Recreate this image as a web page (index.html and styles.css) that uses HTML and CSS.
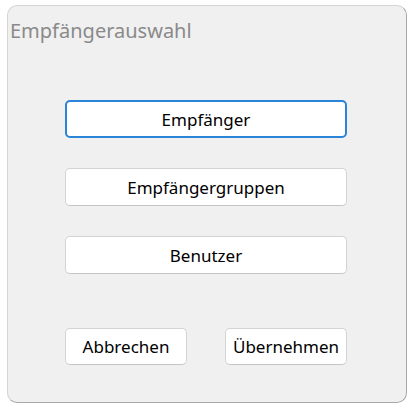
FILE: index.html
```html
<!DOCTYPE html>
<html lang="de">
<head>
<meta charset="utf-8">
<title>Empfängerauswahl</title>
<link rel="stylesheet" href="styles.css">
</head>
<body>
<div class="dialog">
  <div class="title">Empfängerauswahl</div>
  <div class="choices">
    <button class="btn btn-big btn-primary">Empfänger</button>
    <button class="btn btn-big">Empfängergruppen</button>
    <button class="btn btn-big">Benutzer</button>
  </div>
  <div class="footer">
    <button class="btn btn-small">Abbrechen</button>
    <button class="btn btn-small">Übernehmen</button>
  </div>
</div>
</body>
</html>
```
FILE: styles.css
```css
html, body {
  margin: 0;
  padding: 0;
  background: #ffffff;
}
body {
  font-family: "Noto Sans", "Open Sans", sans-serif;
}
.dialog {
  margin: 5px 0 0 7px;
  width: 398px;
  height: 396px;
  box-sizing: content-box;
  border: 1px solid #d4d4d4;
  border-right-color: #a8a8a8;
  border-bottom-color: #a8a8a8;
  border-radius: 10px;
  background: #f0f0f0;
  display: flex;
  flex-direction: column;
}
.title {
  height: 36px;
  box-sizing: border-box;
  padding: 14px 0 0 2px;
  font-size: 20px;
  line-height: 22px;
  color: #8a8a8a;
}
.choices {
  margin: 58px 0 0 57px;
  width: 282px;
  display: flex;
  flex-direction: column;
  gap: 30px;
}
.btn {
  font-family: inherit;
  background: #ffffff;
  border: 1px solid #d3d3d3;
  border-bottom-color: #c4c4c4;
  border-radius: 5px;
  color: #000000;
  font-size: 17px;
  padding: 0;
  box-sizing: border-box;
}
.btn-big {
  height: 38px;
  width: 100%;
}
.btn-primary {
  border: 2px solid #2a84d8;
}
.footer {
  margin: 54px 0 0 57px;
  width: 282px;
  display: flex;
  justify-content: space-between;
}
.btn-small {
  width: 122px;
  height: 37px;
}
```
